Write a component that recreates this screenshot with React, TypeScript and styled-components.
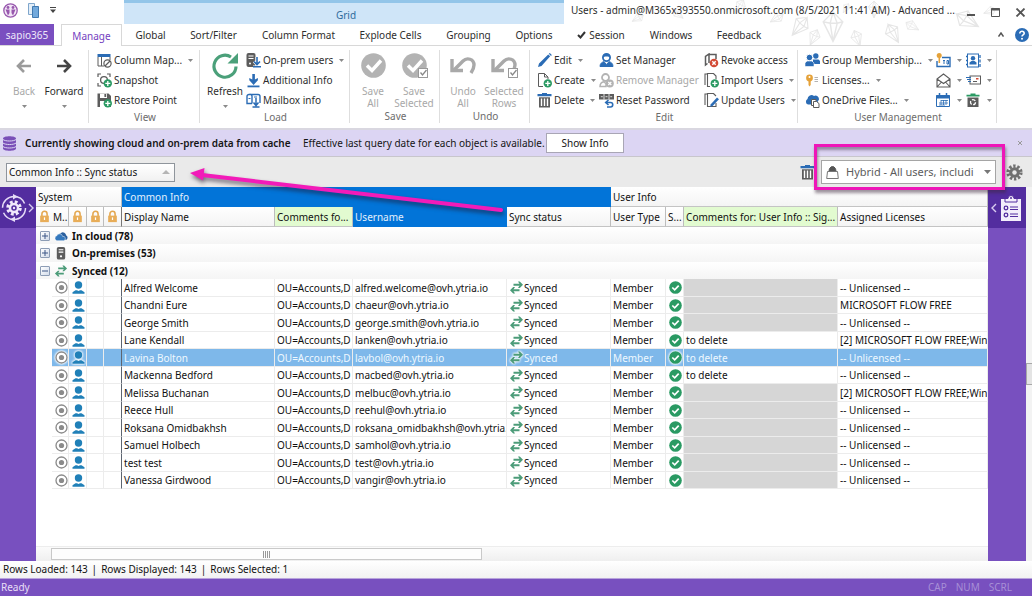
import React from "react";
import styled, { createGlobalStyle, css } from "styled-components";

const GlobalStyle = createGlobalStyle`
  *, *::before, *::after { box-sizing: border-box; }
  body { margin: 0; background: #fff; }
  body, button, select {
    font-family: "Noto Sans", "Open Sans", sans-serif;
    font-size: 10px;
    line-height: 14px;
    color: #2e2e2e;
  }
  button, select { margin: 0; padding: 0; border: 0; background: none; border-radius: 0; }
  svg { display: block; flex: none; }
`;

/* ---------- icons ---------- */

const G = "#2a9a63";
const B = "#2b6cb5";
const D = "#5c5c5c";
const L = "#b3b3b3";

const Plus = () => (
  <>
    <circle cx="10.8" cy="10.4" r="4.2" fill={G} />
    <path d="M10.8 7.9v5M8.3 10.4h5" stroke="#fff" strokeWidth="1.3" />
  </>
);

const art: Record<string, React.ReactNode> = {
  columns: (
    <>
      <rect x=".5" y="1" width="13" height="3" fill={B} />
      <path d="M1 4v9h6M4.5 4v9M13 4v3" fill="none" stroke={D} />
      <circle cx="10.5" cy="10.5" r="3.6" fill="#fff" stroke={D} strokeWidth="1.2" />
      <path d="M8 13l5-5" stroke={D} strokeWidth="1.2" />
    </>
  ),
  snapshot: (
    <>
      <path d="M1 4V1h3M10 1h3v3M1 10v3h3" fill="none" stroke={D} strokeWidth="1.2" />
      <circle cx="7" cy="7" r="3.4" fill="none" stroke={D} strokeWidth="1.3" />
      <Plus />
    </>
  ),
  restore: (
    <>
      <path d="M.5.5h11l2.5 2.5v11H.5z" fill={D} />
      <rect x="3" y=".5" width="7" height="4.5" fill="#fff" />
      <rect x="7.4" y="1" width="1.8" height="3" fill={D} />
      <rect x="3" y="8" width="8" height="6" fill="#fff" />
      <Plus />
    </>
  ),
  onprem: (
    <>
      <rect x=".5" y="0" width="9" height="14" rx="2" fill={D} />
      <path d="M2.5 3h5M2.5 5.5h5" stroke="#fff" />
      <circle cx="4" cy="10.5" r="1" fill="#fff" />
      <path d="M11 4v7M8 8.5l3 3 3-3M7 14h8" fill="none" stroke="#fff" strokeWidth="3" />
      <path d="M11 4v7M8 8.5l3 3 3-3M7 13.8h8" fill="none" stroke={B} strokeWidth="1.6" />
    </>
  ),
  download: (
    <>
      <path d="M6.3 1h2.6v5.5l3-1.500v2.200L7.600 12 3.300 7.200V5l3 1.500z" fill={B} />
      <rect x="1.500" y="12.500" width="12" height="1.800" fill={B} />
    </>
  ),
  mailbox: (
    <>
      <path d="M3 1.500h9a2 2 0 0 1 2 2V10M6 10.500H1v-7a2 2 0 0 1 2-2 2 2 0 0 1 3 2v7" fill="none" stroke={B} strokeWidth="1.400" />
      <path d="M2.500 5.500h2M8 4h3" stroke={B} />
      <path d="M10 5v7M7.500 9.500l2.500 3 2.500-3M6.500 14h7" fill="none" stroke={B} strokeWidth="1.500" />
    </>
  ),
  pencil: <path d="M1 14l1-3.400L11.200 1.400l2 1.900L4.500 13zM11.800.8l1-.8 2 2-.8 1z" fill={B} />,
  create: (
    <>
      <path d="M6 13.500H1.500v-13h6l3.500 3.500v2M7.500.5V4H11" fill="none" stroke={D} />
      <Plus />
    </>
  ),
  trash: (
    <>
      <path d="M5 0h5v1h4.500v2.200H.5V1H5z" fill={B} />
      <path d="M2 4.300h11V14.500H2z" fill={D} />
      <path d="M4.500 5.500v7.500M7.500 5.500v7.500M10.500 5.500v7.500" stroke="#fff" strokeWidth="1.400" />
    </>
  ),
  manager: (
    <>
      <circle cx="7.500" cy="4.500" r="3.600" fill="none" stroke={B} strokeWidth="1.800" />
      <path d="M4 4.500C5 3 10 3 11 4.500V3C10 0 5 0 4 3z" fill={B} />
      <path d="M1 13.500c0-3 2-4.500 4-4.800l2.500 2.800L10 8.700c2 .3 4 1.800 4 4.800z" fill={B} stroke={B} />
    </>
  ),
  unmanager: (
    <>
      <circle cx="6.500" cy="4.500" r="3.500" fill="none" stroke={L} strokeWidth="1.800" />
      <path d="M1 13.500c0-3 2-4.500 4-4.800l2 2V13.500z" fill="none" stroke={L} strokeWidth="1.500" />
      <circle cx="10.800" cy="10.500" r="4" fill={L} />
      <path d="M9.300 9l3 3M12.300 9l-3 3" stroke="#fff" strokeWidth="1.200" />
    </>
  ),
  reset: (
    <>
      <path d="M0 1h15v5.500H0z" fill={D} />
      <path d="M1.800 3.700h2M6.500 3.700h2M11.200 3.700h2M5 1v5.500M10 1v5.500" stroke="#fff" strokeWidth=".8" />
      <path d="M7 9.500h4.500a2 2 0 0 1 0 4.500H8M9.500 7L6.700 9.500l2.800 2.500" fill="none" stroke={B} strokeWidth="1.600" />
    </>
  ),
  revoke: (
    <>
      <path d="M3.500 10.500L1.500 12V3.500L5 1v9M5 1.500h7V6" fill="none" stroke={D} strokeWidth="1.500" />
      <circle cx="10" cy="10" r="4.300" fill="#d24a35" />
      <path d="M8.300 8.300l3.400 3.400M11.700 8.300l-3.400 3.400" stroke="#fff" strokeWidth="1.400" />
    </>
  ),
  importUsers: (
    <>
      <path d="M1 12V1h2M6 13.500H3.500V.5h6L12 3v3" fill="none" stroke={D} strokeWidth="1.100" />
      <Plus />
    </>
  ),
  updateUsers: (
    <>
      <path d="M1 12V1h2M12 10v3.500H3.500V.5h6L12 3" fill="none" stroke={D} strokeWidth="1.100" />
      <path d="M6 14l.8-2.800L13 4.500l2 1.800L8.600 13z" fill={B} />
    </>
  ),
  group: (
    <>
      <circle cx="10.800" cy="3" r="2.700" fill={B} />
      <path d="M8 6.500h5.500l1.500 1.500v3H8z" fill={B} />
      <circle cx="4.500" cy="4.500" r="3.300" fill={B} stroke="#fff" />
      <path d="M0 13.500V10l2-2h5l2 2v3.500z" fill={B} stroke="#fff" strokeWidth=".6" />
    </>
  ),
  license: (
    <>
      <circle cx="4.500" cy="5" r="3.400" fill="#e5a23a" />
      <circle cx="4.500" cy="4" r="1" fill="#fff" />
      <path d="M3.500 7.500h2.200V12l-1.200 1.500L3.500 12z" fill="#e5a23a" />
      <path d="M9.500 4.500H13M9.500 6.500H13M9.500 8.500H13" stroke={L} />
    </>
  ),
  onedrive: (
    <>
      <path d="M3 11.500a3 3 0 0 1-.5-5.500A4 4 0 0 1 9 3a3.500 3.500 0 0 1 5 3.500l-3 5z" fill={B} />
      <path d="M6.500 6.500H11v6H6.500z" fill="#fff" stroke={D} />
      <path d="M8.500 8.500h3l2.500 2v4H8.500z" fill="#fff" stroke={D} />
    </>
  ),
  keycard: (
    <>
      <path d="M1 8v5.500h13v-9H6" fill="none" stroke={B} strokeWidth="1.400" />
      <path d="M7 7.500h2M8 7.500V11M11 7.500h1.500V11H11z" fill="none" stroke={B} />
      <circle cx="3.200" cy="2.500" r="2.500" fill="#e5a23a" />
      <path d="M2.500 4h1.600v6H2.500z" fill="#e5a23a" />
    </>
  ),
  contact: (
    <>
      <rect x="1.500" y="1" width="11" height="13" fill="none" stroke={B} />
      <path d="M0 3.500h2M0 7.500h2M0 11.500h2M14 2v3M14 6.500v3M14 11v3" stroke={B} strokeWidth="1.300" />
      <circle cx="7" cy="5.200" r="2.200" fill={B} />
      <path d="M3.500 11.500V9.500l2-1.500h3l2 1.500v2z" fill={B} />
    </>
  ),
  mail: <path d="M1 6l6.500-5L14 6v8H1zM1 6l6.500 4.500L14 6M1 14l4.500-5M14 14L9.500 9" fill="none" stroke={D} strokeWidth="1.100" />,
  send: (
    <>
      <rect x="4" y="3" width="10.500" height="8" fill="none" stroke={D} />
      <path d="M10 5h2.500v1.500H10z" fill="#d24a35" />
      <path d="M7 8.500h4" stroke={D} />
      <path d="M0 4.500h5M1 6.500h4M2 8.500h3" stroke={B} strokeWidth="1.200" />
    </>
  ),
  calendar: (
    <>
      <path d="M.5 2.500h13v11H.5z" fill="#fff" stroke={B} />
      <path d="M.5 2h13v3.500H.5z" fill={B} />
      <path d="M3.500 0v2M10.500 0v2" stroke={B} strokeWidth="1.500" />
      <path d="M5 7.500h7M3 10h9M3 12h6M5 7v5M7.500 7v5M10 7v5" stroke={B} strokeWidth=".8" />
    </>
  ),
  recycle: (
    <>
      <path d="M4.500.5h5v1.200h4V3.500H.5V1.700h4z" fill={G} />
      <path d="M1.500 4.500h11V14h-11z" fill={D} />
      <circle cx="7" cy="9.200" r="2.500" fill="none" stroke="#fff" strokeWidth="1.300" strokeDasharray="3.700 1.500" />
    </>
  ),
  lock: (
    <>
      <path d="M4.500 7V4.500a3 3 0 0 1 6 0V7" fill="none" stroke="#e3a750" strokeWidth="1.800" />
      <rect x="2.500" y="6.500" width="10" height="7.500" fill="#e8ad58" />
      <path d="M7.500 8.500v3" stroke="#fff" strokeWidth="1.400" />
    </>
  ),
  cloud: (
    <>
      <path d="M7.500 10a3.300 3.300 0 0 1 0-5.800A3.500 3.500 0 0 1 13 7c2 .5 2 4 0 4.500H9z" fill="#2a5f9e" />
      <path d="M3 12.500a2.700 2.700 0 0 1 0-5.200 3.200 3.200 0 0 1 6.200.7 2.300 2.300 0 0 1 1.300 4.500z" fill="#3478bd" stroke="#fff" strokeWidth=".5" />
    </>
  ),
  server: (
    <>
      <rect x="3" y="1" width="9" height="13.500" rx="2" fill={D} />
      <path d="M5 4h5M5 6.500h5" stroke="#fff" strokeWidth="1.200" />
      <circle cx="7.500" cy="11" r="1.200" fill="#fff" />
    </>
  ),
  sync: (
    <>
      <path d="M4.500 4.700H12M3 10.300h7.500" fill="none" stroke="#4c9c79" strokeWidth="1.900" />
      <path d="M9 1.500h1.800L14 4.700l-3.200 3.200H9l2-3.200zM6 7.100H4.200L1 10.300l3.200 3.200H6l-2-3.200z" fill="#4c9c79" />
    </>
  ),
  radio: (
    <>
      <circle cx="7.500" cy="7.500" r="5.500" fill="#fff" stroke="#8a8a8a" strokeWidth="1.300" />
      <circle cx="7.500" cy="7.500" r="2.600" fill="#8a8a8a" />
    </>
  ),
  user: (
    <>
      <circle cx="7.500" cy="5" r="3.700" fill="#2080b8" />
      <path d="M1.500 13.700v-1.500l3-2h1.500l1.500.8 1.500-.8h1.500l3 2v1.500z" fill="#2080b8" />
    </>
  ),
  check: (
    <>
      <circle cx="7.500" cy="7.500" r="6.300" fill={G} />
      <path d="M4.300 7.500l2.400 2.400 4-4.300" fill="none" stroke="#fff" strokeWidth="1.700" />
    </>
  ),
};

const Icon = ({ name, size = 15 }: { name: string; size?: number }) => (
  <svg width={size} height={size} viewBox="0 0 15 15" aria-hidden="true">
    {art[name]}
  </svg>
);

const Caret = ({ up = false, color = "#8a8a8a", w = 5 }: { up?: boolean; color?: string; w?: number }) => (
  <svg width={w} height={w > 5 ? 4 : 3} viewBox="0 0 6 4" preserveAspectRatio="none" aria-hidden="true">
    <path d={up ? "M0 4l3-4 3 4z" : "M0 0h6L3 4z"} fill={color} />
  </svg>
);

const BigArrow = ({ back = false }: { back?: boolean }) => (
  <svg width="24" height="24" viewBox="0 0 24 24" aria-hidden="true">
    <path
      d={back ? "M19 12H7M12 6l-6 6 6 6" : "M5 12h12M12 6l6 6-6 6"}
      fill="none"
      stroke={back ? "#9b9b9b" : "#454545"}
      strokeWidth="2.600"
    />
  </svg>
);

const MiniCheck = () => (
  <>
    <rect x="17.500" y="16.500" width="9" height="9" fill="#fff" stroke="#999" />
    <path d="M19.500 20.500l2 2.500 4-5" fill="none" stroke="#888" strokeWidth="1.300" />
  </>
);

const SaveArt = ({ selected = false }: { selected?: boolean }) => (
  <svg width="27" height="27" viewBox="0 0 27 27" aria-hidden="true">
    <circle cx="13.500" cy="13.500" r="12.300" fill="#b3b3b3" />
    <path d="M7 13.500l5 5 9-10" fill="none" stroke="#fff" strokeWidth="3.400" />
    {selected && <MiniCheck />}
  </svg>
);

const UndoArt = ({ selected = false }: { selected?: boolean }) => (
  <svg width="27" height="27" viewBox="0 0 27 27" aria-hidden="true">
    <path d="M4 18l9-9c4-4 11-2 11 4 0 3-1 5-3 8" fill="none" stroke="#a9a9a9" strokeWidth="3.400" />
    <path d="M2 7v11.500h11" fill="none" stroke="#a9a9a9" strokeWidth="3.400" />
    {selected && <MiniCheck />}
  </svg>
);

const RefreshArt = () => (
  <svg width="28" height="28" viewBox="0 0 28 28" aria-hidden="true">
    <path d="M20 5A11 11 0 1 0 25 14.500" fill="none" stroke="#4ba07a" strokeWidth="3.200" />
    <path d="M27 1v10.500H16.500z" fill="#4ba07a" />
  </svg>
);

const GearArt = ({ size, color, hole }: { size: number; color: string; hole: string }) => (
  <svg width={size} height={size} viewBox="0 0 20 20" aria-hidden="true">
    <circle cx="10" cy="10" r="7.500" fill="none" stroke={color} strokeWidth="4" strokeDasharray="2.700 2.010" />
    <circle cx="10" cy="10" r="6.200" fill={color} />
    <circle cx="10" cy="10" r="2.600" fill={hole} />
  </svg>
);

const Chevron = ({ left = false }: { left?: boolean }) => (
  <svg width="6" height="10" viewBox="0 0 6 10" aria-hidden="true">
    <path d={left ? "M5 1L1 5l4 4" : "M1 1l4 4-4 4"} fill="none" stroke="#d9ccf0" strokeWidth="1.400" />
  </svg>
);

/* ---------- title bar and tabs ---------- */

const Window = styled.div`
  display: flex;
  flex-direction: column;
  min-height: 100vh;
  overflow: hidden;
`;

const Header = styled.header`
  position: relative;
  isolation: isolate;
`;

const Pattern = styled.svg`
  position: absolute;
  z-index: -1;
  top: 0;
  right: 32px;
`;

const TitleBar = styled.div`
  display: flex;
  height: 24px;
`;

const QuickAccess = styled.div`
  display: flex;
  align-items: center;
  width: 124px;
  flex: none;
  padding: 0 3px 4px;
  gap: 10px;
`;

const ContextTitle = styled.div`
  flex: none;
  width: 440px;
  border-top: 3px solid #93c5e9;
  background: #cfe5f8;
  color: #2f6c9c;
  text-align: center;
  line-height: 24px;
  padding-left: 4px;
`;

const WindowTitle = styled.div`
  flex: 1;
  min-width: 0;
  padding-left: 7px;
  line-height: 21px;
  white-space: nowrap;
`;

const WindowButtons = styled.div`
  display: flex;
  align-items: center;
  gap: 14px;
  padding-right: 6px;
`;

const IconButton = styled.button`
  display: flex;
  align-items: center;
  justify-content: center;
`;

const TabBar = styled.nav`
  display: flex;
  height: 22px;
  border-bottom: 1px solid #d8d8d8;
`;

const AppTab = styled.button`
  width: 54px;
  margin-right: 7px;
  height: 21px;
  background: #7a4fc0;
  color: #efe8fa;
`;

const Tab = styled.button<{ $w: number; $active?: boolean }>`
  width: ${(p) => p.$w}px;
  display: flex;
  align-items: center;
  justify-content: center;
  gap: 3px;
  white-space: nowrap;
  ${(p) =>
    p.$active &&
    css`
      height: 22px;
      border: 1px solid #d8d8d8;
      border-bottom: 0;
      background: #fff;
      color: #7441c0;
    `}
`;

const TabEnd = styled.div`
  margin-left: auto;
  display: flex;
  align-items: center;
  gap: 11px;
  padding-right: 3px;
`;

const Diamonds = () => {
  const items: [number, number, number, number][] = [
    [18, 18, 60, 0.6], [58, 14, -50, 0.6], [120, 6, 30, 0.7], [157, 18, 60, 0.7], [180, 26, 40, 1.1],
    [213, 26, 0, 1.4], [194, 37, 25, 0.8], [237, 38, -20, 0.8], [226, 8, 30, 0.5], [254, 9, 0, 0.8],
    [273, 33, -30, 1], [292, 26, -60, 0.7], [347, 20, -60, 1.2], [370, 11, 70, 0.6],
  ];
  return (
    <Pattern width="380" height="46" viewBox="0 0 380 46" aria-hidden="true">
      {items.map(([x, y, r, s]) => (
        <path
          key={`${x}-${y}`}
          transform={`translate(${x} ${y}) rotate(${r}) scale(${s})`}
          d="M0-10L7-3 0 11-7-3zM0-10L-2-2 0 11 3-2zM-7-3L-2-2 3-2 7-3"
          fill="none"
          stroke="#e6e6e6"
        />
      ))}
    </Pattern>
  );
};

/* ---------- ribbon ---------- */

const Ribbon = styled.div`
  display: flex;
  padding: 4px 0;
  height: 84px;
  border-bottom: 2px solid #d9d7e0;
`;

const Group = styled.section<{ $w: number }>`
  width: ${(p) => p.$w}px;
  height: 73px;
  flex: none;
  display: flex;
  flex-direction: column;
  border-right: 1px solid #dedede;
`;

const GroupBody = styled.div<{ $pad?: number; $cols?: string }>`
  height: 60px;
  padding-left: ${(p) => p.$pad ?? 8}px;
  display: grid;
  grid-template-columns: ${(p) => p.$cols ?? "1fr"};
`;

const GroupName = styled.div`
  padding-left: 2px;
  text-align: center;
  color: #6c6c6c;
`;

const Stack = styled.div`
  display: grid;
  grid-template-rows: repeat(3, 20px);
  justify-items: start;
`;

const ToolButton = styled.button`
  display: flex;
  align-items: center;
  gap: 2px;
  white-space: nowrap;
  &:disabled { color: #a8a8a8; }
  & > span + svg { margin-left: 4px; }
  & > svg + svg { margin-left: 4px; }
`;

const LargeButton = styled.button`
  display: flex;
  flex-direction: column;
  align-items: center;
  line-height: 12px;
  padding-top: 1px;
  white-space: pre-line;
  &:disabled { color: #a8a8a8; }
`;

const LargeArt = styled.span`
  height: 34px;
  padding-bottom: 5px;
  display: flex;
  align-items: center;
`;

const LargeCaret = styled.span`
  margin-top: 8px;
`;

const Tool = ({ icon, label, menu, disabled }: { icon: string; label?: string; menu?: boolean; disabled?: boolean }) => (
  <ToolButton disabled={disabled} aria-label={label ? undefined : icon}>
    <Icon name={icon} />
    {label && <span>{label}</span>}
    {menu && <Caret />}
  </ToolButton>
);

const Large = ({ art: picture, label, menu, disabled }: { art: React.ReactNode; label: string; menu?: boolean; disabled?: boolean }) => (
  <LargeButton disabled={disabled}>
    <LargeArt>{picture}</LargeArt>
    <span>{label}</span>
    {menu && (
      <LargeCaret>
        <Caret />
      </LargeCaret>
    )}
  </LargeButton>
);

/* ---------- message bar and filter bar ---------- */

const MessageBar = styled.div`
  display: flex;
  align-items: center;
  height: 26px;
  padding: 0 9px 0 3px;
  background: #dcd5f3;
  white-space: nowrap;
  color: #151515;
`;

const MessageTitle = styled.strong`
  margin: 0 13px 0 9px;
  font-weight: 600;
  width: 265px;
`;

const MessageText = styled.span`
  width: 243px;
`;

const OutlineButton = styled.button`
  width: 78px;
  height: 20px;
  border: 1px solid #a9a6b5;
  background: #fff;
  color: #151515;
`;

const CloseButton = styled(IconButton)`
  margin-left: auto;
`;

const FilterBar = styled.div`
  position: relative;
  display: flex;
  align-items: center;
  height: 31px;
  padding: 0 9px 0 6px;
  border-top: 1px solid #c8c6cc;
  background: #eaeaea;
`;

const GroupByButton = styled.button`
  display: flex;
  align-items: center;
  justify-content: space-between;
  width: 169px;
  height: 19px;
  padding: 0 4px 0 2px;
  border: 1px solid #8f959c;
  background: linear-gradient(#fff, #f1f1f1);
  color: #151515;
`;

const FilterEnd = styled.div`
  display: flex;
  align-items: center;
  gap: 6px;
  margin-left: auto;
`;

const ViewPicker = styled.label`
  position: relative;
  display: flex;
  align-items: center;
  width: 175px;
  height: 24px;
  margin-right: 4px;
  padding: 0 4px;
  border: 1px solid #a5a5a5;
  background: #fff;
`;

const ViewSelect = styled.select`
  flex: 1;
  min-width: 0;
  appearance: none;
  height: 20px;
  margin-left: 7px;
  font-size: 11px;
  color: #5c5c5c;
  outline: 0;
`;

const Highlight = styled.span`
  position: absolute;
  inset: -17px -10px -7px -8px;
  border: 3px solid #ee16b8;
  box-shadow: 1px 3px 3px rgba(60, 40, 60, 0.5), inset 1px 3px 3px rgba(60, 40, 60, 0.45);
  pointer-events: none;
`;

const Pointer = styled.svg`
  position: absolute;
  z-index: 2;
  left: 186px;
  top: 6px;
  pointer-events: none;
  filter: drop-shadow(1px 3px 2px rgba(30, 20, 40, 0.6));
`;

/* ---------- grid ---------- */

const Body = styled.main`
  flex: 1;
  display: flex;
  min-height: 0;
`;

const SidePanel = styled.aside<{ $w: number }>`
  width: ${(p) => p.$w}px;
  flex: none;
  background: #7850bf;
`;

const SideToggle = styled.button`
  width: 100%;
  height: 41px;
  display: flex;
  align-items: center;
  justify-content: space-between;
  padding: 0 2px 0 1px;
  background: #532d9f;
`;

const SideToggleRight = styled(SideToggle)`
  padding: 0 5px 0 3px;
`;

const GridPane = styled.div`
  flex: 1;
  min-width: 0;
  display: flex;
  flex-direction: column;
  overflow: hidden;
`;

const Table = styled.table`
  width: 100%;
  table-layout: fixed;
  border-collapse: separate;
  border-spacing: 0;
  color: #111;
  white-space: nowrap;
`;

const Th = styled.th<{ $tone?: "blue" | "green"; $edge?: boolean }>`
  height: 20px;
  padding: 0 0 0 2px;
  overflow: hidden;
  text-align: left;
  font-weight: 400;
  background: linear-gradient(#fff, #f4f4f4);
  border-bottom: 1px solid #c4c4c4;
  border-right: 1px solid ${(p) => (p.$edge ? "#777" : "#bdbdbd")};
  ${(p) =>
    p.$tone === "blue" &&
    css`
      background: #0274d8;
      border-color: #0274d8;
      color: #e3f0fc;
    `}
  ${(p) => p.$tone === "green" && "background: #e2fbd0;"}
`;

const ThInner = styled.span`
  display: flex;
  align-items: center;
  gap: 2px;
`;

const GroupRow = styled.tr`
  height: 17px;
  background: linear-gradient(#fff, #f5f5f5);
  &:nth-child(even) { height: 18px; }
`;

const GroupCell = styled.td`
  padding: 0 0 0 4px;
`;

const GroupLabel = styled.div`
  display: flex;
  align-items: center;
  font-weight: 700;
  gap: 4px;
`;

const Expander = styled.button`
  width: 10px;
  height: 10px;
  border: 1px solid #8d9db5;
  border-radius: 1px;
  background: linear-gradient(135deg, #fff, #d3dcea);
`;

const Td = styled.td<{ $blank?: boolean; $edge?: boolean; $bare?: boolean }>`
  padding: 0 0 0 2px;
  overflow: hidden;
  border-right: 1px solid ${(p) => (p.$edge ? "#5d6570" : "#ececec")};
  border-bottom: 1px solid #ececec;
  ${(p) => p.$blank && "background: #d6d6d6;"}
  ${(p) => p.$bare && "border-color: transparent; background: #fff;"}
`;

const Row = styled.tr<{ $selected?: boolean }>`
  height: 17px;
  &:nth-child(even) { height: 18px; }
  ${(p) =>
    p.$selected &&
    css`
      color: #eff8ff;
      background: #7eb8ea;
      svg { filter: drop-shadow(0 0 1px #fff) drop-shadow(0 0 1px #fff); }
    `}
`;

const CellFlex = styled.div`
  display: flex;
  align-items: center;
`;

const HScroll = styled.div`
  margin-top: auto;
  height: 15px;
  padding: 1px 0 1px 15px;
  border-top: 1px solid #ededed;
  background: linear-gradient(#fbfbfb, #efefef);
`;

const HThumb = styled.div`
  display: flex;
  align-items: center;
  justify-content: center;
  width: 46%;
  height: 12px;
  border: 1px solid #c9c9c9;
  background: #fdfdfd;
  &::before {
    content: "";
    width: 7px;
    height: 7px;
    background: repeating-linear-gradient(90deg, #999 0 1px, transparent 1px 2px);
  }
`;

const VScroll = styled.div`
  width: 6px;
  flex: none;
  background: #f3f3f3;
  padding-top: 176px;
`;

const VThumb = styled.div`
  height: 22px;
  border: 1px solid #a8a8a8;
  border-right: 0;
  background: #e4e4e4;
`;

/* ---------- status ---------- */

const CountBar = styled.div`
  display: flex;
  gap: 4px;
  height: 18px;
  padding-left: 3px;
  line-height: 17px;
  color: #111;
  background: linear-gradient(#fff, #f2f2f2);
  border-bottom: 1px solid #b9a4dc;
`;

const StatusBar = styled.footer`
  display: flex;
  justify-content: space-between;
  height: 17px;
  padding: 0 20px 0 1px;
  line-height: 17px;
  background: #7850bf;
  color: #e8dff6;
`;

const KeyStates = styled.div`
  display: flex;
  gap: 9px;
  color: #a78fd6;
`;

/* ---------- data ---------- */

const tabs: [string, number][] = [
  ["Global", 57], ["Sort/Filter", 69], ["Column Format", 101], ["Explode Cells", 83], ["Grouping", 73],
  ["Options", 58], ["Session", 76], ["Windows", 64], ["Feedback", 72],
];

type User = { name: string; login: string; comment?: string; license?: string; selected?: boolean };

const users: User[] = [
  { name: "Alfred Welcome", login: "alfred.welcome" },
  { name: "Chandni Eure", login: "chaeur", license: "MICROSOFT FLOW FREE" },
  { name: "George Smith", login: "george.smith" },
  { name: "Lane Kendall", login: "lanken", comment: "to delete", license: "[2] MICROSOFT FLOW FREE;Win" },
  { name: "Lavina Bolton", login: "lavbol", comment: "to delete", selected: true },
  { name: "Mackenna Bedford", login: "macbed", comment: "to delete" },
  { name: "Melissa Buchanan", login: "melbuc", license: "[2] MICROSOFT FLOW FREE;Win" },
  { name: "Reece Hull", login: "reehul" },
  { name: "Roksana Omidbakhsh", login: "roksana_omidbakhsh" },
  { name: "Samuel Holbech", login: "samhol" },
  { name: "test test", login: "test" },
  { name: "Vanessa Girdwood", login: "vangir" },
];

const columnWidths = [16, 17, 18, 17, 18, 153, 78, 154, 104, 55, 18, 154];

const groups: { label: string; icon: string; open?: boolean }[] = [
  { label: "In cloud (78)", icon: "cloud" },
  { label: "On-premises (53)", icon: "server" },
  { label: "Synced (12)", icon: "sync", open: true },
];

export default function App() {
  return (
    <Window>
      <GlobalStyle />
      <Header>
        <Diamonds />
        <TitleBar>
          <QuickAccess>
            <IconButton aria-label="sapio365">
              <svg width="15" height="15" viewBox="0 0 15 15">
                <circle cx="7.500" cy="7.500" r="6.700" fill="#f2e6f6" stroke="#9858ae" strokeWidth="1.300" />
                <circle cx="5" cy="4.500" r="1.400" fill="#9858ae" />
                <circle cx="10" cy="4.500" r="1.400" fill="#9858ae" />
                <path d="M2.500 6.500h4v3.500l-1.500 2.500zM12.500 6.500h-4v3.500l1.500 2.500z" fill="#9858ae" />
              </svg>
            </IconButton>
            <IconButton aria-label="Windows">
              <svg width="12" height="15" viewBox="0 0 12 15">
                <path d="M.5.5h6v11h-6z" fill="#e3eef8" stroke="#7fa6cc" />
                <path d="M4.500 3.500h6v11h-6z" fill="#72a9dc" stroke="#4179b0" />
              </svg>
            </IconButton>
            <IconButton aria-label="Customize">
              <svg width="6" height="6" viewBox="0 0 6 6">
                <path d="M0 .5h6" stroke="#444" />
                <path d="M0 2.500h6L3 6z" fill="#444" />
              </svg>
            </IconButton>
          </QuickAccess>
          <ContextTitle>Grid</ContextTitle>
          <WindowTitle>Users - admin@M365x393550.onmicrosoft.com (8/5/2021 11:41 AM) - Advanced ...</WindowTitle>
          <WindowButtons>
            <IconButton aria-label="Minimize">
              <svg width="9" height="9" viewBox="0 0 9 9"><path d="M0 7h8" stroke="#555" strokeWidth="2" /></svg>
            </IconButton>
            <IconButton aria-label="Maximize">
              <svg width="11" height="9" viewBox="0 0 11 9">
                <path d="M1.500.5h8v8h-8z" fill="none" stroke="#555" />
                <path d="M1 1.500h9" stroke="#555" strokeWidth="2" />
              </svg>
            </IconButton>
            <IconButton aria-label="Close">
              <svg width="11" height="9" viewBox="0 0 11 9"><path d="M1.500.5l8 8M9.500.5l-8 8" stroke="#555" strokeWidth="1.800" /></svg>
            </IconButton>
          </WindowButtons>
        </TitleBar>
        <TabBar>
          <AppTab>sapio365</AppTab>
          <Tab $w={61} $active>Manage</Tab>
          {tabs.map(([label, w]) => (
            <Tab key={label} $w={w}>
              {label === "Session" && (
                <svg width="9" height="8" viewBox="0 0 9 8"><path d="M1 4l2.500 2.500L8 1" fill="none" stroke="#333" strokeWidth="2" /></svg>
              )}
              {label}
            </Tab>
          ))}
          <TabEnd>
            <IconButton aria-label="Collapse ribbon">
              <svg width="6" height="5" viewBox="0 0 6 5"><path d="M.5 4.500L3 1l2.500 3.500" fill="none" stroke="#555" strokeWidth="1.500" /></svg>
            </IconButton>
            <IconButton aria-label="Help">
              <svg width="14" height="14" viewBox="0 0 14 14">
                <circle cx="7" cy="7" r="7" fill="#2b6cb5" />
                <path d="M4.800 5.400c0-3 4.600-2.800 4.400 0C9.100 7 7 6.800 7 8.600" fill="none" stroke="#fff" strokeWidth="1.600" />
                <circle cx="7" cy="10.700" r="1" fill="#fff" />
              </svg>
            </IconButton>
          </TabEnd>
        </TabBar>
      </Header>

      <Ribbon>
        <Group $w={89}>
          <GroupBody $pad={4} $cols="40px 40px">
            <Large art={<BigArrow back />} label="Back" menu disabled />
            <Large art={<BigArrow />} label="Forward" menu />
          </GroupBody>
        </Group>
        <Group $w={111}>
          <GroupBody>
            <Stack>
              <Tool icon="columns" label="Column Map..." menu />
              <Tool icon="snapshot" label="Snapshot" />
              <Tool icon="restore" label="Restore Point" />
            </Stack>
          </GroupBody>
          <GroupName>View</GroupName>
        </Group>
        <Group $w={150}>
          <GroupBody $pad={4} $cols="42px 1fr">
            <Large art={<RefreshArt />} label="Refresh" menu />
            <Stack>
              <Tool icon="onprem" label="On-prem users" menu />
              <Tool icon="download" label="Additional Info" />
              <Tool icon="mailbox" label="Mailbox info" />
            </Stack>
          </GroupBody>
          <GroupName>Load</GroupName>
        </Group>
        <Group $w={90}>
          <GroupBody $pad={3} $cols="40px 42px">
            <Large art={<SaveArt />} label={"Save\nAll"} disabled />
            <Large art={<SaveArt selected />} label={"Save\nSelected"} disabled />
          </GroupBody>
          <GroupName>Save</GroupName>
        </Group>
        <Group $w={90}>
          <GroupBody $pad={3} $cols="40px 42px">
            <Large art={<UndoArt />} label={"Undo\nAll"} disabled />
            <Large art={<UndoArt selected />} label={"Selected\nRows"} disabled />
          </GroupBody>
          <GroupName>Undo</GroupName>
        </Group>
        <Group $w={268}>
          <GroupBody $pad={7} $cols="62px 105px 1fr">
            <Stack>
              <Tool icon="pencil" label="Edit" menu />
              <Tool icon="create" label="Create" menu />
              <Tool icon="trash" label="Delete" menu />
            </Stack>
            <Stack>
              <Tool icon="manager" label="Set Manager" />
              <Tool icon="unmanager" label="Remove Manager" disabled />
              <Tool icon="reset" label="Reset Password" />
            </Stack>
            <Stack>
              <Tool icon="revoke" label="Revoke access" />
              <Tool icon="importUsers" label="Import Users" menu />
              <Tool icon="updateUsers" label="Update Users" menu />
            </Stack>
          </GroupBody>
          <GroupName>Edit</GroupName>
        </Group>
        <Group $w={199}>
          <GroupBody $pad={7} $cols="131px 30px 1fr">
            <Stack>
              <Tool icon="group" label="Group Membership..." menu />
              <Tool icon="license" label="Licenses..." menu />
              <Tool icon="onedrive" label="OneDrive Files..." menu />
            </Stack>
            <Stack>
              <Tool icon="keycard" menu />
              <Tool icon="mail" menu />
              <Tool icon="calendar" menu />
            </Stack>
            <Stack>
              <Tool icon="contact" menu />
              <Tool icon="send" menu />
              <Tool icon="recycle" menu />
            </Stack>
          </GroupBody>
          <GroupName>User Management</GroupName>
        </Group>
      </Ribbon>

      <MessageBar>
        <svg width="13" height="15" viewBox="0 0 13 15" aria-hidden="true">
          <path d="M0 2.500C0-.5 13-.5 13 2.500v10c0 3-13 3-13 0z" fill="#7a4fb8" />
          <path d="M0 3.500c2 2 11 2 13 0M0 7c2 2 11 2 13 0M0 10.500c2 2 11 2 13 0" fill="none" stroke="#dcd5f3" />
        </svg>
        <MessageTitle>Currently showing cloud and on-prem data from cache</MessageTitle>
        <MessageText>Effective last query date for each object is available.</MessageText>
        <OutlineButton>Show Info</OutlineButton>
        <CloseButton aria-label="Dismiss">
          <svg width="6" height="6" viewBox="0 0 6 6"><path d="M1 1l4 4M5 1L1 5" stroke="#999" /></svg>
        </CloseButton>
      </MessageBar>

      <FilterBar>
        <GroupByButton>
          Common Info :: Sync status
          <Caret up color="#b5b5b5" w={8} />
        </GroupByButton>
        <Pointer width="330" height="60" viewBox="0 0 330 60" aria-hidden="true">
          <path d="M16 12L315 47" stroke="#f21bb9" strokeWidth="4" strokeLinecap="round" />
          <path d="M4 10L18.500 5 17 17.500z" fill="#f21bb9" />
        </Pointer>
        <FilterEnd>
          <IconButton aria-label="Delete view">
            <Icon name="trash" />
          </IconButton>
          <ViewPicker>
            <svg width="13" height="14" viewBox="0 0 13 14" aria-hidden="true">
              <path d="M3 6.500a3.500 5 0 0 1 7 0z" fill="#555" stroke="#555" />
              <path d="M1.500 6.500h10l.8 7H.7z" fill="#fff" stroke="#777" />
            </svg>
            <ViewSelect aria-label="View" defaultValue="hybrid">
              <option value="hybrid">Hybrid - All users, includi</option>
            </ViewSelect>
            <Caret color="#777" w={7} />
            <Highlight />
          </ViewPicker>
          <IconButton aria-label="Settings">
            <GearArt size={17} color="#707070" hole="#eaeaea" />
          </IconButton>
        </FilterEnd>
      </FilterBar>

      <Body>
        <SidePanel $w={36}>
          <SideToggle aria-label="Open options panel">
            <svg width="26" height="28" viewBox="0 0 26 28" aria-hidden="true">
              <circle cx="13" cy="14" r="11.500" fill="none" stroke="#e6dcf7" strokeWidth="1.500" strokeDasharray="31 5.130" />
              <path d="M12 0l5 2.500-5 3zM14 28l-5-2.500 5-3z" fill="#e6dcf7" />
              <circle cx="13" cy="14" r="6" fill="none" stroke="#f0e9fb" strokeWidth="3.500" strokeDasharray="2.700 2.012" />
              <circle cx="13" cy="14" r="4" fill="none" stroke="#f0e9fb" strokeWidth="2.500" />
              <circle cx="13" cy="14" r="1.200" fill="#f0e9fb" />
            </svg>
            <Chevron />
          </SideToggle>
        </SidePanel>

        <GridPane>
          <Table>
            <colgroup>
              {columnWidths.map((w, i) => (
                <col key={i} width={w} />
              ))}
              <col />
            </colgroup>
            <thead>
              <tr>
                <Th colSpan={5}>System</Th>
                <Th colSpan={4} $tone="blue">Common Info</Th>
                <Th colSpan={4}>User Info</Th>
              </tr>
              <tr>
                <Th colSpan={2}><ThInner><Icon name="lock" size={13} />M..</ThInner></Th>
                <Th aria-label="Type"><Icon name="lock" size={13} /></Th>
                <Th aria-label="Flag"><Icon name="lock" size={13} /></Th>
                <Th aria-label="State" $edge><Icon name="lock" size={13} /></Th>
                <Th>Display Name</Th>
                <Th $tone="green">Comments fo...</Th>
                <Th $tone="blue">Username</Th>
                <Th>Sync status</Th>
                <Th>User Type</Th>
                <Th>S...</Th>
                <Th $tone="green">Comments for: User Info :: Sig...</Th>
                <Th>Assigned Licenses</Th>
              </tr>
            </thead>
            <tbody>
              {groups.map((g) => (
                <GroupRow key={g.label}>
                  <GroupCell colSpan={13}>
                    <GroupLabel>
                      <Expander aria-label={g.open ? "Collapse" : "Expand"}>
                        <svg width="8" height="8" viewBox="0 0 8 8">
                          <path d={g.open ? "M1 4h6" : "M1 4h6M4 1v6"} stroke="#3d5686" />
                        </svg>
                      </Expander>
                      <Icon name={g.icon} size={14} />
                      {g.label}
                    </GroupLabel>
                  </GroupCell>
                </GroupRow>
              ))}
              {users.map((u) => (
                <Row key={u.name} $selected={u.selected}>
                  <Td $bare />
                  <Td><Icon name="radio" /></Td>
                  <Td><Icon name="user" /></Td>
                  <Td />
                  <Td $edge />
                  <Td>{u.name}</Td>
                  <Td>OU=Accounts,D</Td>
                  <Td>{u.login}@ovh.ytria.io</Td>
                  <Td><CellFlex><Icon name="sync" />Synced</CellFlex></Td>
                  <Td>Member</Td>
                  <Td><Icon name="check" /></Td>
                  <Td $blank={!u.comment}>{u.comment}</Td>
                  <Td>{u.license ?? "-- Unlicensed --"}</Td>
                </Row>
              ))}
            </tbody>
          </Table>
          <HScroll>
            <HThumb />
          </HScroll>
        </GridPane>

        <SidePanel $w={38}>
          <SideToggleRight aria-label="Open details panel">
            <Chevron left />
            <svg width="20" height="26" viewBox="0 0 20 26" aria-hidden="true">
              <path d="M0 4h20v22H0z" fill="#f3eefb" />
              <path d="M4 7V3.500h3a3 3 0 0 1 6 0h3V7z" fill="#f3eefb" stroke="#532d9f" />
              <circle cx="10" cy="3" r="1" fill="#532d9f" />
              <circle cx="5" cy="13" r="1.800" fill="none" stroke="#532d9f" strokeWidth="1.300" />
              <circle cx="5" cy="20" r="1.800" fill="none" stroke="#532d9f" strokeWidth="1.300" />
              <path d="M9 12h8M9 14.500h8M9 19h8M9 21.500h8" stroke="#532d9f" strokeWidth="1.200" />
            </svg>
          </SideToggleRight>
        </SidePanel>
        <VScroll>
          <VThumb />
        </VScroll>
      </Body>

      <CountBar>
        <span>Rows Loaded: 143</span>
        <span>|</span>
        <span>Rows Displayed: 143</span>
        <span>|</span>
        <span>Rows Selected: 1</span>
      </CountBar>
      <StatusBar>
        <span>Ready</span>
        <KeyStates>
          <span>CAP</span>
          <span>NUM</span>
          <span>SCRL</span>
        </KeyStates>
      </StatusBar>
    </Window>
  );
}
